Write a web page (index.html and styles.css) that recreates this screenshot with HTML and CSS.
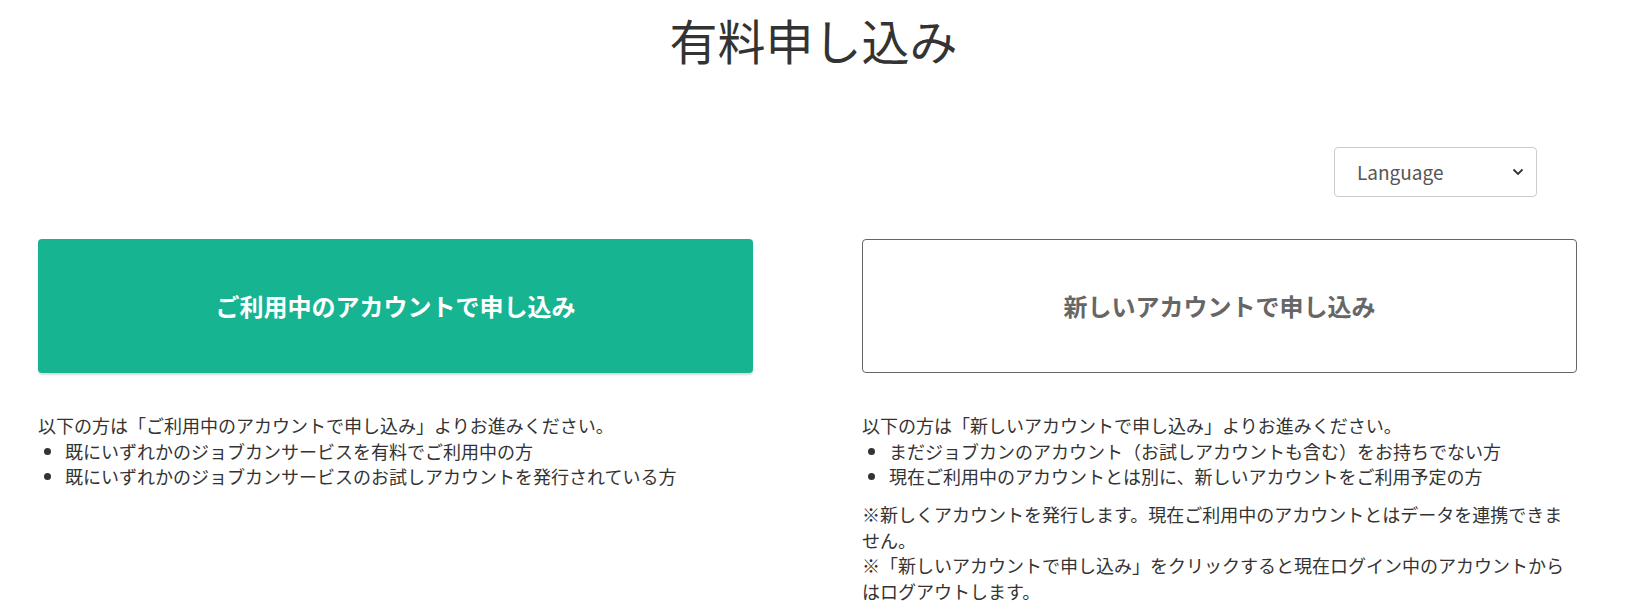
FILE: index.html
```html
<!DOCTYPE html>
<html lang="ja">
<head>
    <meta charset="UTF-8">
    <meta name="viewport" content="width=device-width, initial-scale=1.0">
    <link rel="stylesheet" href="styles.css">
    <title>有料申し込み</title>
</head>
<body>
    <div class="page">
        <h1 class="title">有料申し込み</h1>

        <div class="lang-row">
            <div class="lang-select">
                <span>Language</span>
                <svg class="chevron" width="12" height="8" viewBox="0 0 12 8"><path d="M1.5 1.5 L6 6 L10.5 1.5" fill="none" stroke="#333" stroke-width="1.8"/></svg>
            </div>
        </div>

        <div class="columns">
            <div class="col">
                <a class="apply-btn apply-btn-green" href="#">ご利用中のアカウントで申し込み</a>
                <div class="note">
                    <p>以下の方は「ご利用中のアカウントで申し込み」よりお進みください。</p>
                    <ul>
                        <li>既にいずれかのジョブカンサービスを有料でご利用中の方</li>
                        <li>既にいずれかのジョブカンサービスのお試しアカウントを発行されている方</li>
                    </ul>
                </div>
            </div>
            <div class="col">
                <a class="apply-btn apply-btn-outline" href="#">新しいアカウントで申し込み</a>
                <div class="note">
                    <p>以下の方は「新しいアカウントで申し込み」よりお進みください。</p>
                    <ul>
                        <li>まだジョブカンのアカウント（お試しアカウントも含む）をお持ちでない方</li>
                        <li>現在ご利用中のアカウントとは別に、新しいアカウントをご利用予定の方</li>
                    </ul>
                    <p>※新しくアカウントを発行します。現在ご利用中のアカウントとはデータを連携できません。<br>※「新しいアカウントで申し込み」をクリックすると現在ログイン中のアカウントからはログアウトします。</p>
                </div>
            </div>
        </div>
    </div>
</body>
</html>
```

FILE: styles.css
```css
* {
  box-sizing: border-box;
}

body {
  margin: 0;
  font-family: "Noto Sans CJK JP", "Noto Sans", sans-serif;
  color: #333;
  background: #fff;
}

.page {
  padding: 0 68px 0 38px;
}

.title {
  margin: 13px 0 0;
  font-size: 48px;
  font-weight: 400;
  line-height: 1.1;
  text-align: center;
  color: #333;
  padding-left: 12px;
}

.lang-row {
  display: flex;
  justify-content: flex-end;
  padding-right: 40px;
  margin-top: 81px;
}

.lang-select {
  width: 203px;
  height: 50px;
  border: 1px solid #ccc;
  border-radius: 4px;
  display: flex;
  align-items: center;
  justify-content: space-between;
  padding: 0 12px 0 22px;
  font-size: 19px;
  color: #555;
}

.columns {
  display: grid;
  grid-template-columns: 715px 715px;
  column-gap: 109px;
  margin-top: 42px;
}

.apply-btn {
  display: flex;
  align-items: center;
  justify-content: center;
  height: 134px;
  border-radius: 4px;
  font-size: 24px;
  font-weight: 700;
  text-decoration: none;
}

.apply-btn-green {
  background: #17b491;
  color: #fff;
  box-shadow: 0 2px 2px rgba(0, 0, 0, 0.15);
}

.apply-btn-outline {
  background: #fff;
  color: #666;
  border: 1px solid #666;
}

.note {
  margin-top: 40px;
  font-size: 18px;
  line-height: 1.42857;
}

.note p {
  margin: 0;
}

.note ul {
  margin: 0 0 12px;
  padding-left: 27px;
}
```
